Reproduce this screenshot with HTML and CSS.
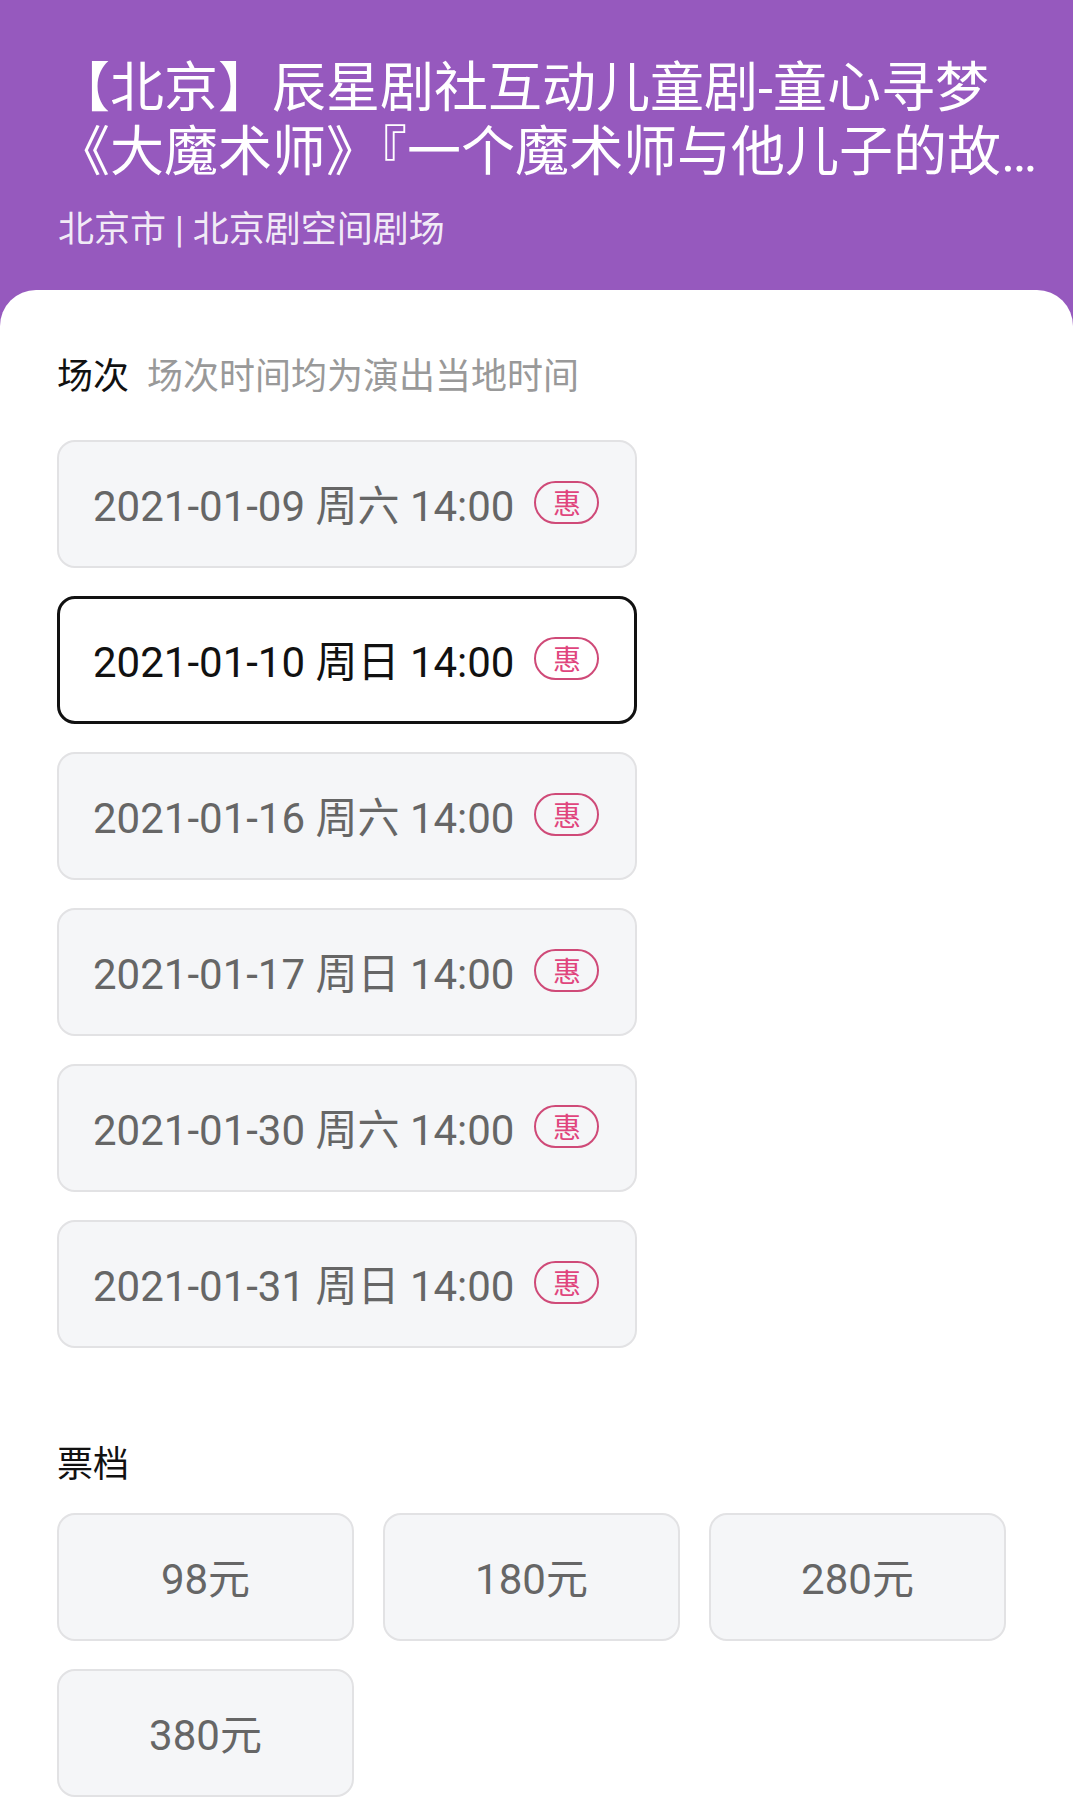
FILE: index.html
```html
<!DOCTYPE html>
<html lang="zh-CN">
<head>
  <meta charset="UTF-8" />
  <title>选择场次</title>
  <link rel="stylesheet" href="styles.css">
</head>
<body>
  <div class="header">
    <h1 class="title">【北京】辰星剧社互动儿童剧-童心寻梦《大魔术师》『一个魔术师与他儿子的故事』</h1>
    <div class="venue">北京市 | 北京剧空间剧场</div>
  </div>

  <div class="panel">
    <div class="section-title">
      场次<span class="hint">场次时间均为演出当地时间</span>
    </div>
    <div class="sessions">
      <div class="session">2021-01-09 周六 14:00<span class="tag">惠</span></div>
      <div class="session active">2021-01-10 周日 14:00<span class="tag">惠</span></div>
      <div class="session">2021-01-16 周六 14:00<span class="tag">惠</span></div>
      <div class="session">2021-01-17 周日 14:00<span class="tag">惠</span></div>
      <div class="session">2021-01-30 周六 14:00<span class="tag">惠</span></div>
      <div class="session">2021-01-31 周日 14:00<span class="tag">惠</span></div>
    </div>

    <div class="section-title prices-title">票档</div>
    <div class="prices">
      <div class="price">98元</div>
      <div class="price">180元</div>
      <div class="price">280元</div>
      <div class="price">380元</div>
    </div>
  </div>
</body>
</html>
```

FILE: styles.css
```css
body {
  margin: 0;
  background: #9659be;
  font-family: Roboto, "Noto Sans CJK SC", sans-serif;
}
.header {
  padding: 57px 8px 36px 56px;
  color: #fff;
}
.title {
  margin: 0;
  font-size: 54px;
  font-weight: 400;
  line-height: 64px;
  display: -webkit-box;
  -webkit-line-clamp: 2;
  -webkit-box-orient: vertical;
  overflow: hidden;
}
.venue {
  margin-top: 21px;
  padding-left: 2px;
  font-size: 36px;
  line-height: 48px;
  color: rgba(255, 255, 255, 0.9);
}
.panel {
  background: #fff;
  border-radius: 36px 36px 0 0;
  padding: 63px 57px 40px;
  min-height: 1400px;
}
.section-title {
  font-size: 36px;
  line-height: 48px;
  color: #111;
}
.hint {
  margin-left: 18px;
  color: #999;
}
.sessions {
  margin-top: 39px;
  display: flex;
  flex-direction: column;
  gap: 28px;
}
.session {
  box-sizing: border-box;
  width: 580px;
  height: 128px;
  padding: 0 0 4px 34px;
  display: flex;
  align-items: center;
  background: #f5f6f8;
  border: 2px solid #e2e2e4;
  border-radius: 18px;
  font-size: 42px;
  color: #666;
}
.session.active {
  background: #fff;
  border: 3px solid #111;
  padding-left: 33px;
  color: #111;
}
.tag {
  margin-left: 20px;
  box-sizing: border-box;
  width: 65px;
  height: 43px;
  border: 2px solid #cf4a78;
  border-radius: 22px;
  display: flex;
  align-items: center;
  justify-content: center;
  font-size: 28px;
  color: #e0457d;
}
.prices-title {
  margin-top: 93px;
}
.prices {
  margin-top: 24px;
  display: grid;
  grid-template-columns: repeat(3, 297px);
  gap: 28px 29px;
}
.price {
  box-sizing: border-box;
  height: 128px;
  padding-bottom: 4px;
  display: flex;
  align-items: center;
  justify-content: center;
  background: #f5f6f8;
  border: 2px solid #e2e2e4;
  border-radius: 18px;
  font-size: 42px;
  color: #666;
}
```
